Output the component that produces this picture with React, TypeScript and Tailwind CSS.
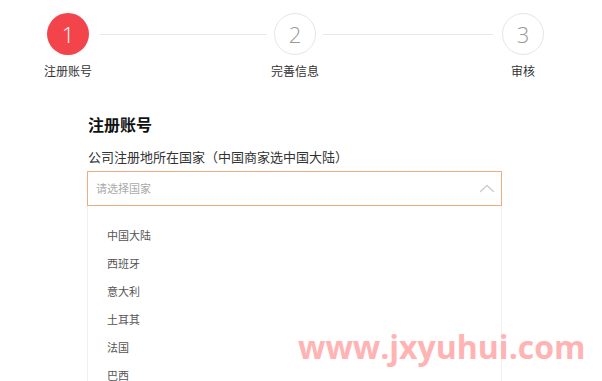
const cjk = "font-['Noto_Sans_CJK_SC','Noto_Sans',sans-serif]";

const countries = ['中国大陆', '西班牙', '意大利', '土耳其', '法国', '巴西'];

function Step({ num, label, active }: { num: string; label: string; active?: boolean }) {
  return (
    <div className="flex w-[42px] flex-col items-center">
      <div
        className={`flex h-[42px] w-[42px] items-center justify-center rounded-full font-['Open_Sans',sans-serif] text-[22px] font-light ${
          active ? 'bg-[#f3434b] text-white' : 'border border-[#e6e6e6] text-[#999999]'
        }`}
      >
        {num}
      </div>
      <div className={`mt-[8px] whitespace-nowrap text-[12px] leading-[16px] text-[#333333] ${cjk}`}>
        {label}
      </div>
    </div>
  );
}

export default function App() {
  return (
    <div className={`relative h-[381px] w-[602px] overflow-hidden bg-white ${cjk}`}>
      <div className="flex items-start pl-[47px] pt-[13px]">
        <Step num="1" label="注册账号" active />
        <div className="ml-[11px] mr-[7px] mt-[21px] h-px w-[167px] bg-[#e8e8e8]" />
        <Step num="2" label="完善信息" />
        <div className="ml-[7px] mr-[9px] mt-[21px] h-px w-[170px] bg-[#e8e8e8]" />
        <Step num="3" label="审核" />
      </div>

      <div className="ml-[87px] w-[415px]">
        <h2 className="mt-[34px] pl-[1px] text-[16px] font-bold leading-[22px] text-[#111111]">注册账号</h2>
        <div className="mt-[13px] pl-[1px] text-[13px] leading-[18px] text-[#333333]">
          公司注册地所在国家（中国商家选中国大陆）
        </div>
        <div className="mt-[5px] flex h-[35px] items-center justify-between border border-[#f0ae80] pl-[8px] pr-[6px]">
          <span className="text-[11px] text-[#aaaaaa]">请选择国家</span>
          <svg width="16" height="9" viewBox="0 0 16 9" fill="none">
            <path d="M1 8L8 1.5L15 8" stroke="#cccccc" strokeWidth="1.3" />
          </svg>
        </div>
        <ul className="border-x border-[#f0f0f0] pt-[15px]">
          {countries.map((c) => (
            <li key={c} className="flex h-[28px] items-center pl-[19px] text-[11px] text-[#555555]">
              {c}
            </li>
          ))}
        </ul>
      </div>

      <div className="absolute left-[298px] top-[328px] font-['Open_Sans',sans-serif] text-[32px] font-bold leading-[38px] text-[#ffb3b3]">
        www.jxyuhui.com
      </div>
    </div>
  );
}
